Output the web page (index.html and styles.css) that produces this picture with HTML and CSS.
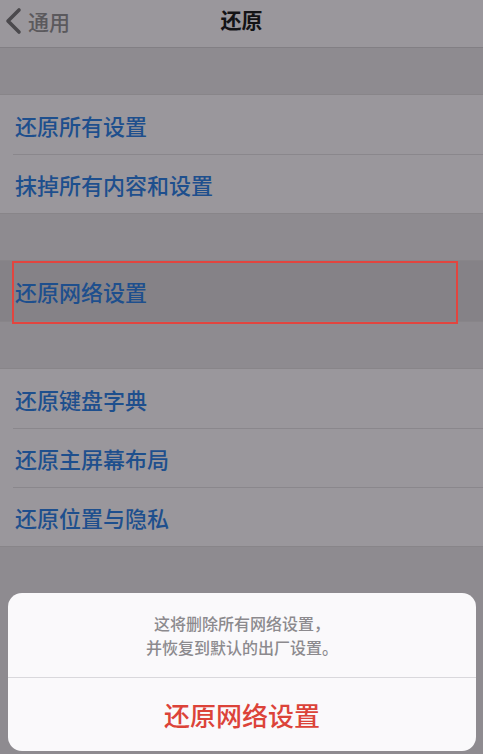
FILE: index.html
```html
<!doctype html>
<html lang="zh-CN">
<head>
  <meta charset="UTF-8">
  <meta name="viewport" content="width=device-width, initial-scale=1">
  <title>还原</title>
  <link rel="stylesheet" href="styles.css">
</head>
<body>
<div class="screen">
  <div class="navbar">
    <div class="back">
      <svg class="chevron" width="20" height="28" viewBox="0 0 20 28">
        <path d="M16 3 L5 14 L16 25" fill="none" stroke="#4b494d" stroke-width="3.6" stroke-linecap="round" stroke-linejoin="round"/>
      </svg>
      <span>通用</span>
    </div>
    <div class="title">还原</div>
  </div>

  <div class="group">
    <div class="cell">还原所有设置</div>
    <div class="cell">抹掉所有内容和设置</div>
  </div>

  <div class="group">
    <div class="cell pressed">
      还原网络设置
      <div class="mark"></div>
    </div>
  </div>

  <div class="group">
    <div class="cell">还原键盘字典</div>
    <div class="cell">还原主屏幕布局</div>
    <div class="cell">还原位置与隐私</div>
  </div>

  <div class="sheet">
    <div class="sheet-msg">这将删除所有网络设置，<br>并恢复到默认的出厂设置。</div>
    <div class="sheet-btn">还原网络设置</div>
  </div>
</div>
</body>
</html>
```

FILE: styles.css
```css
* {
  box-sizing: border-box;
}
body {
  margin: 0;
  font-family: "Noto Sans CJK SC", "Noto Sans", sans-serif;
  background-color: #8e8b90;
}
.screen {
  width: 483px;
  height: 754px;
  overflow: hidden;
  display: flex;
  flex-direction: column;
  background-color: #8e8b90;
}
.navbar {
  position: relative;
  height: 48px;
  flex-shrink: 0;
  display: flex;
  align-items: flex-start;
  background: #9a979c;
  border-bottom: 1px solid #827f84;
}
.back {
  display: flex;
  align-items: center;
  gap: 5px;
  padding: 5px 0 0 3px;
  height: 36px;
  color: #5b595d;
  font-size: 21px;
  font-weight: 500;
}
.title {
  position: absolute;
  left: 0;
  right: 0;
  top: 0;
  height: 48px;
  line-height: 38px;
  text-align: center;
  font-size: 21px;
  font-weight: 700;
  color: #141315;
  pointer-events: none;
}
.group {
  margin-top: 46px;
  background: #9a979c;
  border-top: 1px solid #888589;
  border-bottom: 1px solid #888589;
}
.cell {
  position: relative;
  height: 59px;
  display: flex;
  align-items: center;
  padding-left: 15px;
  font-size: 22px;
  font-weight: 500;
  color: #1e4f8d;
}
.cell + .cell {
  border-top: 1px solid #8a878c;
  margin-left: 13px;
  padding-left: 2px;
}
.cell.pressed {
  height: 60px;
  background: #858287;
}
.mark {
  position: absolute;
  left: 12px;
  top: 0;
  width: 446px;
  height: 63px;
  border: 2px solid #e2453f;
}
.sheet {
  margin: 46px 7px 0 8px;
  height: 158px;
  flex-shrink: 0;
  background: #faf9fb;
  border-radius: 14px;
  display: flex;
  flex-direction: column;
}
.sheet-msg {
  padding: 18px 0;
  text-align: center;
  font-size: 16px;
  font-weight: 500;
  line-height: 24px;
  color: #8c8a8e;
  border-bottom: 1px solid #d9d8dc;
}
.sheet-btn {
  flex: 1;
  display: flex;
  align-items: center;
  justify-content: center;
  font-size: 26px;
  font-weight: 500;
  color: #dc4339;
}
```
